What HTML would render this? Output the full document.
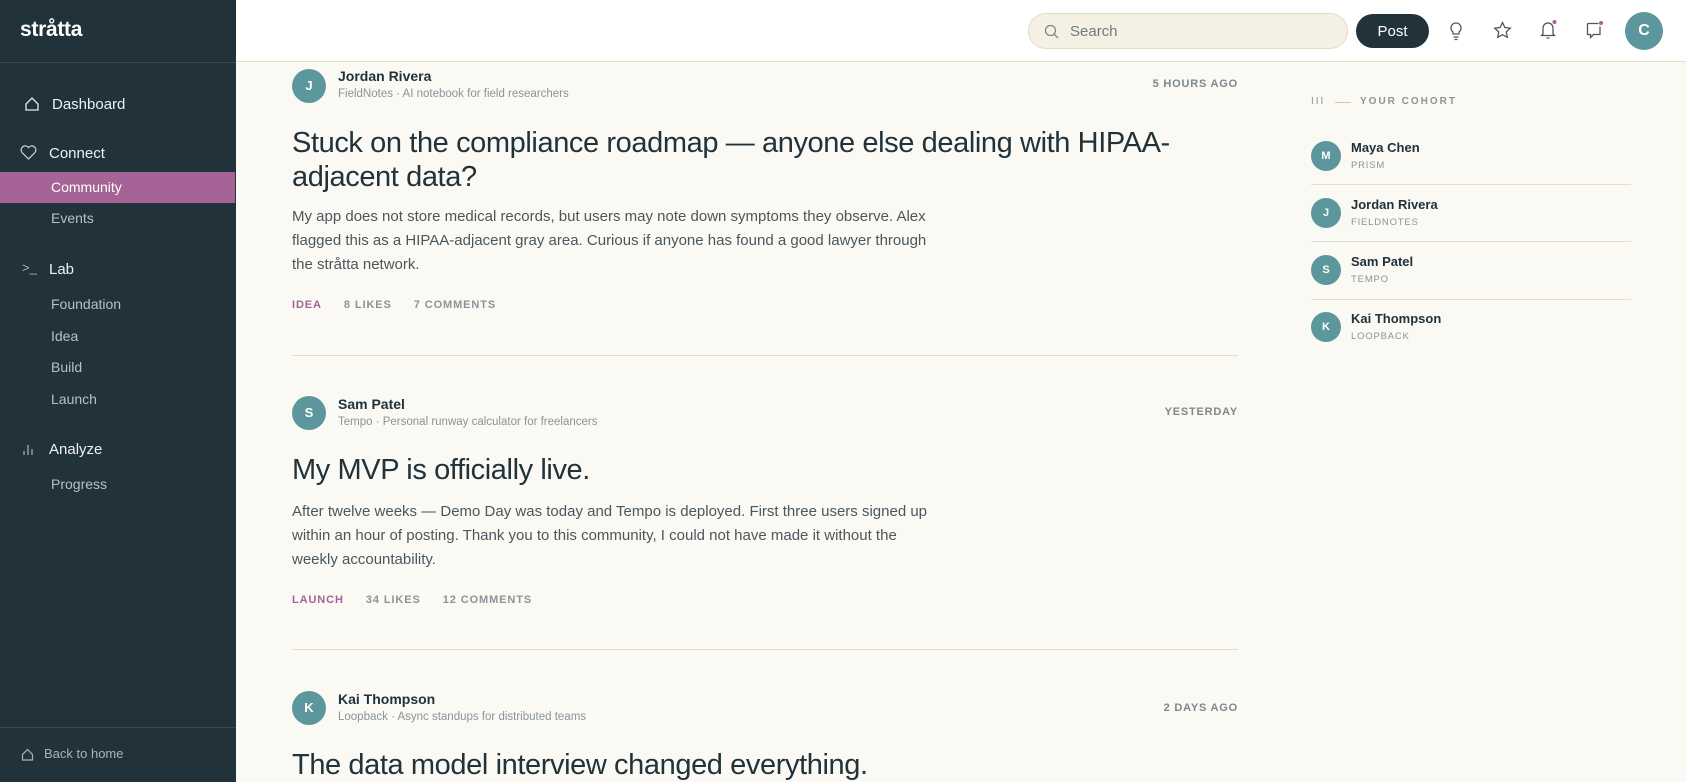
<!DOCTYPE html>
<html><head><meta charset="utf-8"><style>
*{margin:0;padding:0;box-sizing:border-box}
body{width:1686px;height:782px;overflow:hidden;background:#faf9f4;font-family:"Liberation Sans",sans-serif;color:#22323a;position:relative}
.sb{position:absolute;left:0;top:0;width:236px;height:782px;background:#21323b;color:#dfe4e6}
.abs{position:absolute;white-space:nowrap}
.logo{left:20px;top:18px;font-size:21px;font-weight:bold;color:#fff;letter-spacing:-0.3px}
.sec{font-size:15px;color:#eef1f2}
.sub{font-size:14px;color:#b7c0c4;left:51px}
.hl{position:absolute;left:0;top:172px;width:235px;height:31px;background:#a66396}
.top{position:absolute;left:236px;top:0;right:0;height:62px;background:#fff;border-bottom:1px solid #e6dfc8}
.search{position:absolute;left:1028px;top:13px;width:320px;height:36px;border-radius:18px;background:#f4f0e4;border:1px solid #e3dcc6;font-size:15px;color:#707a7e}
.post{position:absolute;left:1356px;top:14px;width:73px;height:34px;border-radius:17px;background:#21323b;color:#fff;font-size:15px;text-align:center;line-height:35px}
.av{position:absolute;border-radius:50%;background:#5b979c;color:#fff;text-align:center;font-weight:bold}
.name{font-size:14px;font-weight:bold;color:#22323a}
.meta{font-size:11.5px;color:#8a9499}
.time{font-size:11px;color:#7d878b;letter-spacing:0.8px;font-weight:bold}
.title{font-size:29px;color:#22323a;line-height:34px;left:292px;width:950px;white-space:normal;letter-spacing:-0.4px}
.body{font-size:15px;color:#4a575d;line-height:24px;left:292px;width:640px;white-space:normal}
.tags{font-size:11px;letter-spacing:0.9px;color:#8a9499;font-weight:bold;left:292px}
.tags b{color:#a66396;margin-right:22px}
.tags span{margin-right:22px}
.div{position:absolute;left:292px;width:946px;height:1px;background:#e3dfcf}
.cd{position:absolute;left:1311px;width:320px;height:1px;background:#e3dfcf}
.cn{font-size:13px;font-weight:bold;left:1351px}
.cs{font-size:9.5px;letter-spacing:0.8px;color:#8a9499;left:1351px}
</style></head><body>
<div class="sb">
<div class="abs logo">stråtta</div>
<div style="position:absolute;left:0;top:62px;width:236px;height:1px;background:#3a4a52"></div>
<svg class="abs" style="left:24px;top:96px" width="16" height="16" viewBox="0 0 16 16" fill="none" stroke="#e6eaec" stroke-width="1.3"><path d="M2 8 L8 2 L14 8 V14 H2 Z"/></svg>
<div class="abs sec" style="left:52px;top:96px">Dashboard</div>
<svg class="abs" style="left:20px;top:145px" width="17" height="15" viewBox="0 0 17 15" fill="none" stroke="#cfd6d9" stroke-width="1.2"><path d="M8.5 14 L2 7.5 A3.6 3.6 0 0 1 8.5 2.5 A3.6 3.6 0 0 1 15 7.5 Z"/></svg>
<div class="abs sec" style="left:49px;top:145px">Connect</div>
<div class="hl"></div>
<div class="abs sub" style="top:179px;color:#fff">Community</div>
<div class="abs sub" style="top:210px">Events</div>
<div class="abs" style="left:22px;top:260px;font-size:13px;color:#aab4b8">&gt;_</div>
<div class="abs sec" style="left:49px;top:261px">Lab</div>
<div class="abs sub" style="top:296px">Foundation</div>
<div class="abs sub" style="top:328px">Idea</div>
<div class="abs sub" style="top:359px">Build</div>
<div class="abs sub" style="top:391px">Launch</div>
<svg class="abs" style="left:22px;top:442px" width="14" height="14" stroke="#aab4b8" stroke-width="1.2"><path d="M2 13V9M6 13V3M10 13V7"/></svg>
<div class="abs sec" style="left:49px;top:441px">Analyze</div>
<div class="abs sub" style="top:476px">Progress</div>
<div style="position:absolute;left:0;top:727px;width:236px;height:1px;background:#3a4a52"></div>
<svg class="abs" style="left:21px;top:748px" width="13" height="13" fill="none" stroke="#aab4b8" stroke-width="1.2"><path d="M1.5 6.5L6.5 1.5L11.5 6.5V12H1.5Z"/></svg>
<div class="abs" style="left:44px;top:746px;font-size:13px;color:#aab4b8">Back to home</div>
</div>
<div class="top"></div>
<div class="search"><svg style="position:absolute;left:15px;top:10px" width="15" height="15" fill="none" stroke="#7d878b" stroke-width="1.3"><circle cx="6.5" cy="6.5" r="5"/><path d="M10 10L14 14"/></svg><span style="position:absolute;left:41px;top:9px">Search</span></div>
<div class="post">Post</div>
<svg class="abs" style="left:1447px;top:21px" width="18" height="20" fill="none" stroke="#4a575d" stroke-width="1.3"><path d="M9 2a5 5 0 0 0-3 9v2h6v-2a5 5 0 0 0-3-9zM6.5 16h5M7.5 18.5h3"/></svg>
<svg class="abs" style="left:1493px;top:21px" width="19" height="19" fill="none" stroke="#4a575d" stroke-width="1.3"><path d="M9.5 1.5l2.4 5 5.4.7-4 3.7 1 5.4-4.8-2.6-4.8 2.6 1-5.4-4-3.7 5.4-.7z"/></svg>
<svg class="abs" style="left:1539px;top:19px" width="20" height="22" fill="none" stroke="#4a575d" stroke-width="1.3"><path d="M4 15V9a5 5 0 0 1 10 0v6l1.5 1.5h-13zM7.5 19h3"/><circle cx="15.5" cy="3" r="2" fill="#a66396" stroke="none"/></svg>
<svg class="abs" style="left:1585px;top:20px" width="20" height="20" fill="none" stroke="#4a575d" stroke-width="1.3"><path d="M2.5 3.5h11M2.5 3.5v11h3v3l3-3h6.5v-8"/><circle cx="16" cy="3" r="2" fill="#a66396" stroke="none"/></svg>
<div class="av" style="left:1625px;top:12px;width:38px;height:38px;line-height:38px;font-size:16px">C</div>

<!-- post 1 -->
<div class="av" style="left:292px;top:69px;width:34px;height:34px;line-height:34px;font-size:13px">J</div>
<div class="abs name" style="left:338px;top:68px">Jordan Rivera</div>
<div class="abs meta" style="left:338px;top:88px">FieldNotes · AI notebook for field researchers</div>
<div class="abs time" style="right:448px;top:78px">5 HOURS AGO</div>
<div class="abs title" style="top:126px">Stuck on the compliance roadmap — anyone else dealing with HIPAA-adjacent data?</div>
<div class="abs body" style="top:205px">My app does not store medical records, but users may note down symptoms they observe. Alex flagged this as a HIPAA-adjacent gray area. Curious if anyone has found a good lawyer through the stråtta network.</div>
<div class="abs tags" style="top:299px"><b>IDEA</b><span>8 LIKES</span><span>7 COMMENTS</span></div>
<div class="div" style="top:355px"></div>
<!-- post 2 -->
<div class="av" style="left:292px;top:396px;width:34px;height:34px;line-height:34px;font-size:13px">S</div>
<div class="abs name" style="left:338px;top:396px">Sam Patel</div>
<div class="abs meta" style="left:338px;top:416px">Tempo · Personal runway calculator for freelancers</div>
<div class="abs time" style="right:448px;top:406px">YESTERDAY</div>
<div class="abs title" style="top:453px">My MVP is officially live.</div>
<div class="abs body" style="top:500px">After twelve weeks — Demo Day was today and Tempo is deployed. First three users signed up within an hour of posting. Thank you to this community, I could not have made it without the weekly accountability.</div>
<div class="abs tags" style="top:594px"><b>LAUNCH</b><span>34 LIKES</span><span>12 COMMENTS</span></div>
<div class="div" style="top:649px"></div>
<!-- post 3 -->
<div class="av" style="left:292px;top:691px;width:34px;height:34px;line-height:34px;font-size:13px">K</div>
<div class="abs name" style="left:338px;top:691px">Kai Thompson</div>
<div class="abs meta" style="left:338px;top:711px">Loopback · Async standups for distributed teams</div>
<div class="abs time" style="right:448px;top:702px">2 DAYS AGO</div>
<div class="abs title" style="top:748px">The data model interview changed everything.</div>

<!-- cohort -->
<div class="abs" style="left:1311px;top:96px;font-size:10px;letter-spacing:2px;color:#8a9499">III</div>
<div style="position:absolute;left:1335px;top:102px;width:16px;height:1px;background:#cfc7a8"></div>
<div class="abs" style="left:1360px;top:96px;font-size:10px;letter-spacing:2px;color:#8a9499;font-weight:bold">YOUR COHORT</div>
<div class="av" style="left:1311px;top:141px;width:30px;height:30px;line-height:30px;font-size:11px">M</div>
<div class="abs cn" style="top:140px">Maya Chen</div><div class="abs cs" style="top:160px">PRISM</div>
<div class="cd" style="top:184px"></div>
<div class="av" style="left:1311px;top:198px;width:30px;height:30px;line-height:30px;font-size:11px">J</div>
<div class="abs cn" style="top:197px">Jordan Rivera</div><div class="abs cs" style="top:217px">FIELDNOTES</div>
<div class="cd" style="top:241px"></div>
<div class="av" style="left:1311px;top:255px;width:30px;height:30px;line-height:30px;font-size:11px">S</div>
<div class="abs cn" style="top:254px">Sam Patel</div><div class="abs cs" style="top:274px">TEMPO</div>
<div class="cd" style="top:299px"></div>
<div class="av" style="left:1311px;top:312px;width:30px;height:30px;line-height:30px;font-size:11px">K</div>
<div class="abs cn" style="top:311px">Kai Thompson</div><div class="abs cs" style="top:331px">LOOPBACK</div>
</body></html>
